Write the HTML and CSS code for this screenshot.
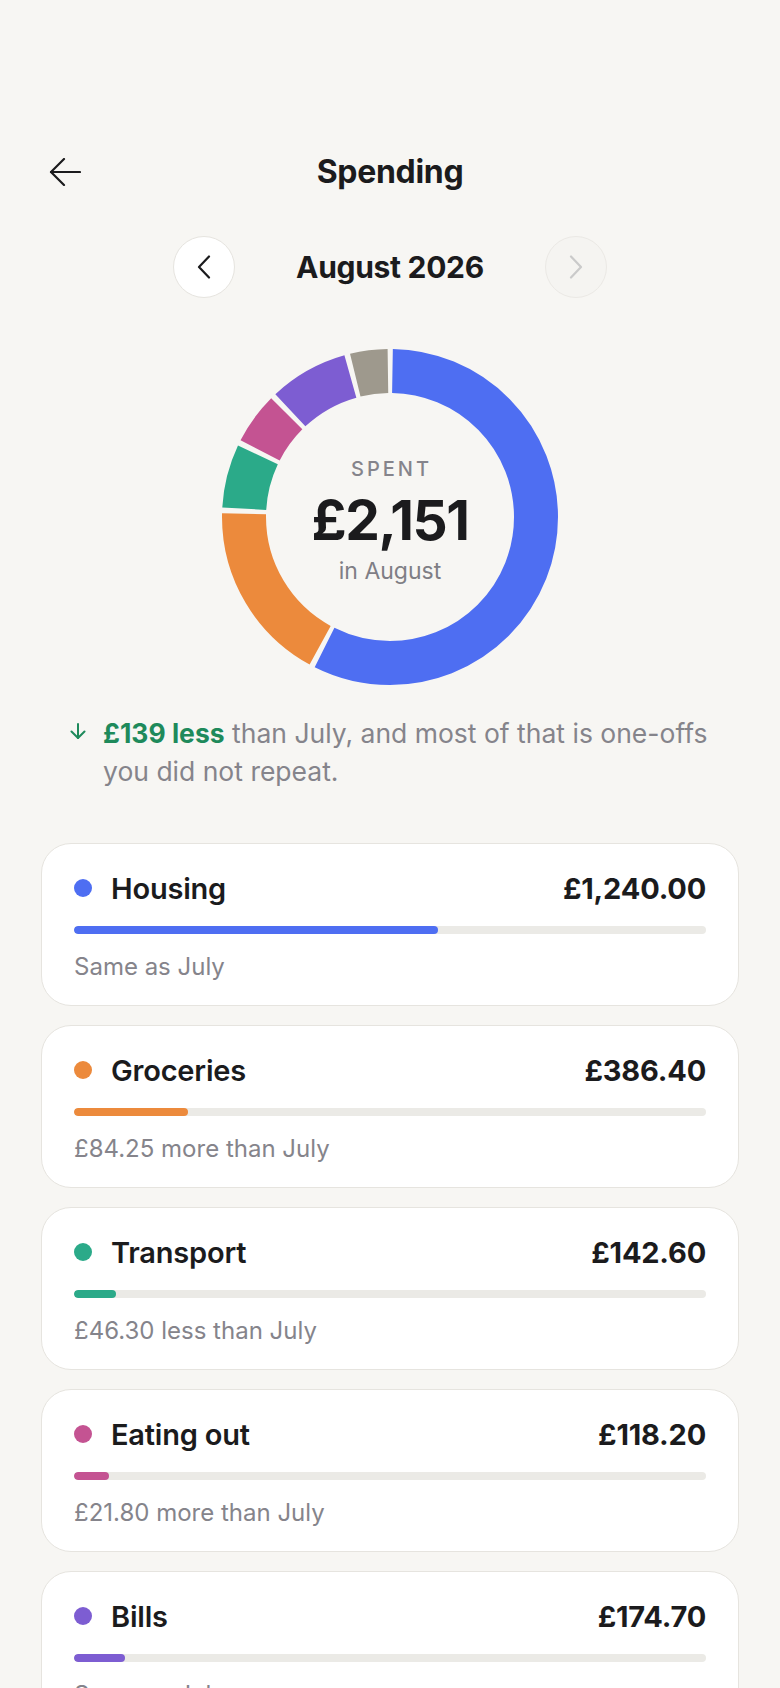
FILE: index.html
```html
<!DOCTYPE html>
<html lang="en">
<head>
  <meta charset="UTF-8"/>
  <meta name="viewport" content="width=device-width,initial-scale=1.0"/>
  <title>Spending</title>
  <link rel="stylesheet" href="styles.css">
</head>
<body>
<div class="screen">
  <header class="topbar">
    <button class="back-btn" aria-label="Back">
      <svg width="32" height="28" viewBox="0 0 32 28" fill="none" stroke="currentColor" stroke-width="2.2" stroke-linecap="round" stroke-linejoin="round"><path d="M31 14H2"/><path d="M15 1L2 14l13 13"/></svg>
    </button>
    <h1>Spending</h1>
    <span></span>
  </header>

  <div class="month-nav">
    <button class="round-btn" aria-label="Previous month">
      <svg width="14" height="24" viewBox="0 0 14 24" fill="none" stroke="currentColor" stroke-width="2.2" stroke-linecap="round" stroke-linejoin="round"><path d="M12 1.5L2 12l10 10.5"/></svg>
    </button>
    <h2>August 2026</h2>
    <button class="round-btn" disabled aria-label="Next month">
      <svg width="14" height="24" viewBox="0 0 14 24" fill="none" stroke="currentColor" stroke-width="2.2" stroke-linecap="round" stroke-linejoin="round"><path d="M2 1.5L12 12 2 22.5"/></svg>
    </button>
  </div>

  <div class="donut">
    <svg width="338" height="338" viewBox="0 0 338 338">
      <g transform="rotate(-90 169 169)" fill="none" stroke-width="44">
        <circle cx="169" cy="169" r="146" stroke="#4e6ef2" stroke-dasharray="523.83 917.35" stroke-dashoffset="-2.5"/>
        <circle cx="169" cy="169" r="146" stroke="#ec8a3c" stroke-dasharray="159.79 917.35" stroke-dashoffset="-531.33"/>
        <circle cx="169" cy="169" r="146" stroke="#2baa89" stroke-dasharray="55.82 917.35" stroke-dashoffset="-696.12"/>
        <circle cx="169" cy="169" r="146" stroke="#c45392" stroke-dasharray="45.41 917.35" stroke-dashoffset="-756.94"/>
        <circle cx="169" cy="169" r="146" stroke="#7d5dd2" stroke-dasharray="69.51 917.35" stroke-dashoffset="-807.35"/>
        <circle cx="169" cy="169" r="146" stroke="#9e998d" stroke-dasharray="33.00 917.35" stroke-dashoffset="-881.86"/>
      </g>
    </svg>
    <div class="donut-label">
      <span class="eyebrow">Spent</span>
      <span class="total">£2,151</span>
      <span class="period">in August</span>
    </div>
  </div>

  <p class="summary">
    <svg width="16" height="16" viewBox="0 0 16 16" fill="none" stroke="currentColor" stroke-width="2" stroke-linecap="round" stroke-linejoin="round"><path d="M8 1v14"/><path d="M1.5 8.5L8 15l6.5-6.5"/></svg>
    <span><strong>£139 less</strong> than July, and most of that is one-offs you did not repeat.</span>
  </p>

  <ul class="categories">
    <li class="card">
      <div class="card-head">
        <span class="name"><i class="dot" style="background:#4e6ef2"></i>Housing</span>
        <span class="amount">£1,240.00</span>
      </div>
      <div class="track"><div class="fill" style="width:57.6%;background:#4e6ef2"></div></div>
      <p class="change">Same as July</p>
    </li>
    <li class="card">
      <div class="card-head">
        <span class="name"><i class="dot" style="background:#ec8a3c"></i>Groceries</span>
        <span class="amount">£386.40</span>
      </div>
      <div class="track"><div class="fill" style="width:18%;background:#ec8a3c"></div></div>
      <p class="change">£84.25 more than July</p>
    </li>
    <li class="card">
      <div class="card-head">
        <span class="name"><i class="dot" style="background:#2baa89"></i>Transport</span>
        <span class="amount">£142.60</span>
      </div>
      <div class="track"><div class="fill" style="width:6.6%;background:#2baa89"></div></div>
      <p class="change">£46.30 less than July</p>
    </li>
    <li class="card">
      <div class="card-head">
        <span class="name"><i class="dot" style="background:#c45392"></i>Eating out</span>
        <span class="amount">£118.20</span>
      </div>
      <div class="track"><div class="fill" style="width:5.5%;background:#c45392"></div></div>
      <p class="change">£21.80 more than July</p>
    </li>
    <li class="card">
      <div class="card-head">
        <span class="name"><i class="dot" style="background:#7d5dd2"></i>Bills</span>
        <span class="amount">£174.70</span>
      </div>
      <div class="track"><div class="fill" style="width:8.1%;background:#7d5dd2"></div></div>
      <p class="change">Same as July</p>
    </li>
    <li class="card">
      <div class="card-head">
        <span class="name"><i class="dot" style="background:#9e998d"></i>Other</span>
        <span class="amount">£89.10</span>
      </div>
      <div class="track"><div class="fill" style="width:4.1%;background:#9e998d"></div></div>
      <p class="change">£12.40 less than July</p>
    </li>
  </ul>
</div>
</body>
</html>
```

FILE: styles.css
```css
* { box-sizing: border-box; }
body { margin: 0; background: #f7f6f3; color: #1b1b1d; font-family: Inter, "Noto Sans", sans-serif; }
button { font: inherit; cursor: pointer; }

.screen { padding: 152px 0 60px; }

.topbar { display: grid; grid-template-columns: 1fr auto 1fr; align-items: center; height: 40px; padding: 0 49px; }
.topbar h1 { margin: 0; font-size: 32px; line-height: 40px; font-weight: 700; letter-spacing: -0.3px; }
.back-btn { background: none; border: none; padding: 0; color: #1b1b1d; display: flex; justify-self: start; }

.month-nav { display: flex; justify-content: center; align-items: center; margin-top: 44px; }
.month-nav h2 { margin: 0; width: 310px; text-align: center; font-size: 30px; line-height: 38px; font-weight: 700; letter-spacing: -0.3px; }
.round-btn { width: 62px; height: 62px; border-radius: 50%; background: #fff; border: 1.5px solid #e6e4df; color: #1b1b1d; display: flex; align-items: center; justify-content: center; padding: 0; }
.round-btn:disabled { background: #f5f4f1; border-color: #ebe9e5; color: #cacaca; cursor: default; }

.donut { position: relative; width: 338px; height: 338px; margin: 50px auto 0; }
.donut svg { display: block; }
.donut-label { position: absolute; inset: 0; padding-top: 8px; display: flex; flex-direction: column; align-items: center; justify-content: center; }
.eyebrow { font-size: 20px; line-height: 24px; font-weight: 500; letter-spacing: 3px; text-transform: uppercase; color: #85848b; margin-right: -3px; }
.total { margin-top: 7px; font-size: 55px; line-height: 64px; font-weight: 700; letter-spacing: -1.5px; }
.period { margin-top: 5px; font-size: 23px; line-height: 28px; color: #7f7e85; }

.summary { display: flex; align-items: flex-start; gap: 17px; margin: 28px 41px 0; padding-left: 29px; font-size: 26.5px; line-height: 38px; color: #85848b; }
.summary svg { flex: none; margin-top: 9px; color: #1e8a5b; }
.summary strong { color: #1e8a5b; font-weight: 700; }

.categories { list-style: none; margin: 53px 0 0; padding: 0 41px; display: flex; flex-direction: column; gap: 19px; }
.card { background: #fff; border: 1.5px solid #e6e4df; border-radius: 30px; padding: 26.5px 32px 22px; }
.card-head { display: flex; justify-content: space-between; align-items: center; height: 35px; }
.name { display: flex; align-items: center; gap: 19px; font-size: 29px; font-weight: 600; letter-spacing: -0.2px; }
.dot { width: 18px; height: 18px; border-radius: 50%; flex: none; }
.amount { font-size: 29px; font-weight: 700; letter-spacing: -0.2px; }
.track { margin-top: 20px; height: 8px; border-radius: 4px; background: #ebeae6; overflow: hidden; }
.fill { height: 100%; border-radius: 4px; }
.change { margin: 17.5px 0 0; font-size: 24px; line-height: 32px; color: #85848b; }
```
